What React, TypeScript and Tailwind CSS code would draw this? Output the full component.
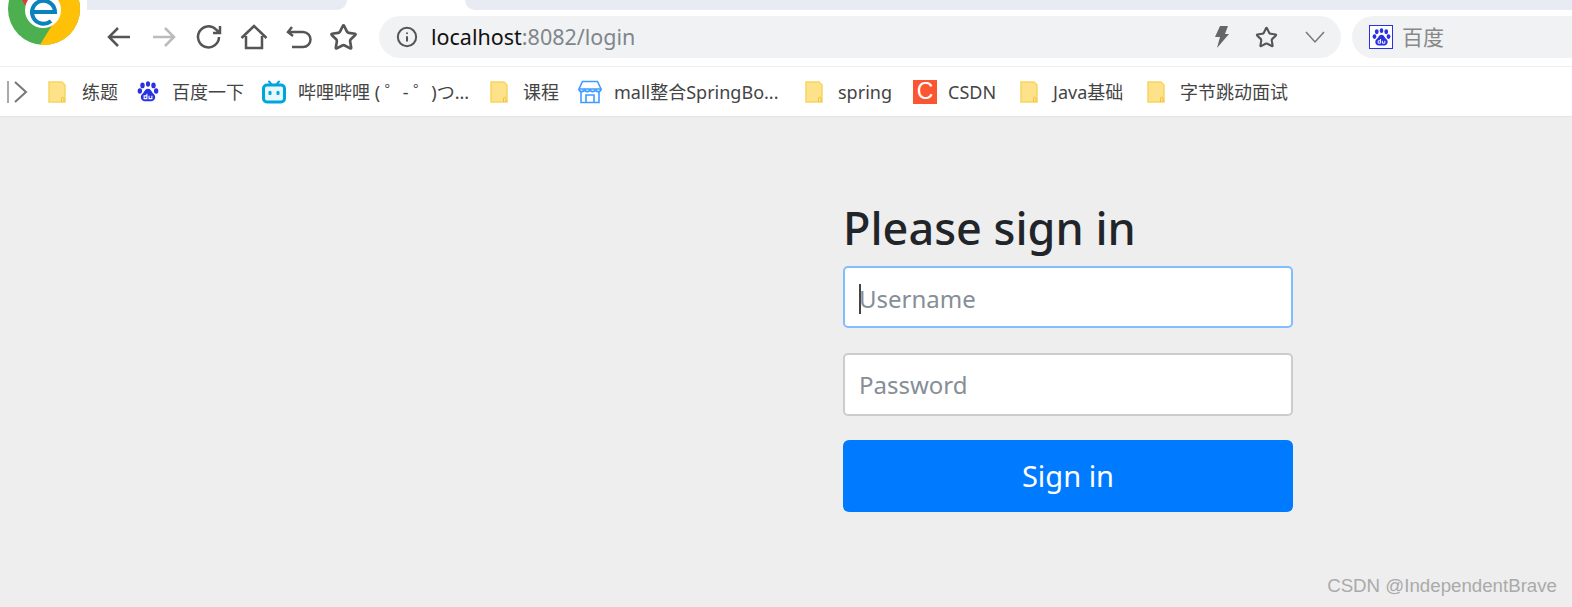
import { Star, Info } from "lucide-react";

const cjk = "font-['Noto_Sans','Noto_Sans_CJK_SC',sans-serif]";

const Folder = () => (
  <svg width="18" height="22" viewBox="0 0 18 22" className="shrink-0">
    <path d="M1 1h13l3 3v17H1z" fill="#fee28a" stroke="#f7d560" strokeWidth="1.5" />
    <path d="M13.5 21v-3.5a1.2 1.2 0 0 1 2.5 0V21" fill="none" stroke="#f0c040" strokeWidth="1" />
  </svg>
);

const Paw = ({ size = 22 }: { size?: number }) => (
  <svg width={size} height={size} viewBox="0 0 20 20" className="shrink-0">
    <ellipse cx="5" cy="4" rx="2" ry="2.6" fill="#2932e1" />
    <ellipse cx="10" cy="2.8" rx="1.9" ry="2.5" fill="#2932e1" />
    <ellipse cx="15" cy="4" rx="2" ry="2.6" fill="#2932e1" />
    <ellipse cx="2.6" cy="9" rx="2" ry="2.5" fill="#2932e1" />
    <ellipse cx="17.4" cy="9" rx="2" ry="2.5" fill="#2932e1" />
    <path d="M10 7c3 0 3 3 5.5 5 2 2 1 6-2.500 6.500H7c-3.500-.5-4.500-4.500-2.500-6.500C7 10 7 7 10 7z" fill="#2932e1" />
    <path d="M9 11.500v4.500H6.500v-2.500H9M11 13.500v2.500h2.500v-2.500" fill="none" stroke="#fff" strokeWidth="1" />
  </svg>
);

const Bilibili = () => (
  <svg width="24" height="24" viewBox="0 0 24 24" className="shrink-0">
    <path d="M7 1.500 10 5M17 1.500 14 5" stroke="#00a5dc" strokeWidth="2" strokeLinecap="round" />
    <rect x="1.500" y="5" width="21" height="17" rx="3.500" fill="#e9f8fd" stroke="#00a5dc" strokeWidth="3" />
    <rect x="6.500" y="11" width="3" height="4" rx="1" fill="#00a5dc" />
    <rect x="14.500" y="11" width="3" height="4" rx="1" fill="#00a5dc" />
  </svg>
);

const Store = () => (
  <svg width="24" height="24" viewBox="0 0 24 24" fill="none" stroke="#3f9cff" strokeWidth="1.600" className="shrink-0">
    <path d="M4.500 1.500h15L23 9H1z" />
    <path d="M1 9c0 3.500 5.500 3.500 5.500 0 0 3.500 5.500 3.500 5.500 0 0 3.500 5.500 3.500 5.500 0 0 3.500 5.500 3.500 5.500 0" />
    <path d="M3 12v10.500h18V12M8 22V15h8v7" />
  </svg>
);

const Csdn = () => (
  <div className="w-6 h-6 shrink-0 bg-[#fc5531] flex items-center justify-center text-white text-[23px] leading-none font-['Liberation_Sans',sans-serif]">
    C
  </div>
);

function Bookmark({ icon, label, gap, width }: { icon: React.ReactNode; label: string; gap: string; width: string }) {
  return (
    <div className={`flex items-center shrink-0 ${width}`}>
      <span className={`flex items-center justify-center ${gap}`}>{icon}</span>
      <span className="text-[18px] text-[#444] whitespace-nowrap leading-none">{label}</span>
    </div>
  );
}

export default function App() {
  return (
    <div className={`relative w-[1572px] h-[607px] overflow-hidden flex flex-col bg-[#eeeeee] ${cjk}`}>
      {/* logo sits over the tab strip */}
      <svg width="90" height="50" viewBox="0 0 90 50" className="absolute left-0 top-0">
        <circle cx="44" cy="9" r="36" fill="#4caf50" />
        <path d="M40 44.800 54 22V0h24.900A36 36 0 0 1 40 44.800z" fill="#ffc107" />
        <path d="M22 0h14v10h-8z" fill="#e53935" />
        <circle cx="43" cy="10" r="18" fill="#fff" />
        <path d="M33 12h22a11.500 11.500 0 1 0-4 9" fill="none" stroke="#0a83bd" strokeWidth="4" />
      </svg>

      {/* tab strip */}
      <div className="h-[10px] bg-white flex shrink-0">
        <div className="w-[87px] shrink-0" />
        <div className="w-[260px] shrink-0 bg-[#e8ebf3] rounded-br-[10px]" />
        <div className="w-[118px] shrink-0" />
        <div className="flex-1 bg-[#e8ebf3] rounded-bl-[10px]" />
      </div>

      {/* toolbar */}
      <div className="h-[57px] bg-white flex items-center shrink-0 border-b border-[#eeeeee] pb-[2px] pl-[104px]">
        <div className="flex items-center gap-[15px] text-[#555]">
          <svg width="30" height="30" viewBox="0 0 30 30" fill="none" stroke="#555" strokeWidth="2.500"><path d="M26 15H5M14 6l-9 9 9 9" /></svg>
          <svg width="30" height="30" viewBox="0 0 30 30" fill="none" stroke="#bbb" strokeWidth="2.500"><path d="M4 15h21M16 6l9 9-9 9" /></svg>
          <svg width="30" height="30" viewBox="0 0 30 30" fill="none" stroke="#555" strokeWidth="2.500"><path d="M25 15a10.500 10.500 0 1 1-3-7.500L26 11M26 4v7h-7" /></svg>
          <svg width="30" height="30" viewBox="0 0 30 30" fill="none" stroke="#555" strokeWidth="2.500"><path d="M2.500 16 15 4l12.500 12M7 14v12h16V14" /></svg>
          <svg width="30" height="30" viewBox="0 0 30 30" fill="none" stroke="#555" strokeWidth="2.500"><path d="M8 5 4 10l5 4M4 10h15a6 6 0 0 1 0 15H8" /></svg>
          <Star size={29} strokeWidth={2.200} color="#555" />
        </div>
        <div className="ml-[21px] w-[962px] h-[42px] rounded-[21px] bg-[#f1f2f4] flex items-center pl-[17px] pr-[14px]">
          <Info size={22} color="#555" strokeWidth={2.200} />
          <span className="ml-[13px] text-[21.500px] text-[#111] leading-none">localhost<span className="text-[#80868b]">:8082/login</span></span>
          <div className="ml-auto flex items-center gap-[25px]">
            <svg width="18" height="24" viewBox="0 0 18 24" fill="#666"><path d="M8 1h8l-3 8h4L5 23l3-11H3z" /></svg>
            <Star size={23} color="#555" strokeWidth={2.200} />
            <svg width="24" height="24" viewBox="0 0 24 24" fill="none" stroke="#777" strokeWidth="1.500"><path d="M3 7l9 10 9-10" /></svg>
          </div>
        </div>
        <div className="ml-[11px] flex-1 h-[42px] rounded-l-[21px] bg-[#f1f2f4] flex items-center pl-[17px]">
          <div className="w-6 h-6 border border-[#2932e1] flex items-center justify-center bg-white">
            <Paw size={19} />
          </div>
          <span className="ml-[9px] text-[21px] text-[#888] leading-none">百度</span>
        </div>
      </div>

      {/* bookmarks */}
      <div className="h-[50px] bg-white flex items-center shrink-0 border-b border-[#e4e4e4] pl-[6px]">
        <svg width="24" height="26" viewBox="0 0 24 26" fill="none" strokeWidth="2" className="mr-[18px]">
          <path d="M2 2v22" stroke="#aaa" />
          <path d="M9 3l11 10L9 23" stroke="#777" />
        </svg>
        <Bookmark icon={<Folder />} label="练题" gap="w-[18px] mr-[16px]" width="w-[89px]" />
        <Bookmark icon={<Paw />} label="百度一下" gap="w-[22px] mr-[13px]" width="w-[125px]" />
        <Bookmark icon={<Bilibili />} label="哔哩哔哩 ( ゜- ゜)つ..." gap="w-[24px] mr-[12px]" width="w-[228px]" />
        <Bookmark icon={<Folder />} label="课程" gap="w-[18px] mr-[15px]" width="w-[88px]" />
        <Bookmark icon={<Store />} label="mall整合SpringBo..." gap="w-[24px] mr-[12px]" width="w-[227px]" />
        <Bookmark icon={<Folder />} label="spring" gap="w-[18px] mr-[15px]" width="w-[108px]" />
        <Bookmark icon={<Csdn />} label="CSDN" gap="w-[24px] mr-[11px]" width="w-[107px]" />
        <Bookmark icon={<Folder />} label="Java基础" gap="w-[18px] mr-[15px]" width="w-[127px]" />
        <Bookmark icon={<Folder />} label="字节跳动面试" gap="w-[18px] mr-[15px]" width="w-[150px]" />
      </div>

      {/* login form */}
      <div className="flex-1 pl-[843px] pt-[84px]">
        <form className="w-[450px] flex flex-col" onSubmit={(e) => e.preventDefault()}>
          <h2 className="text-[45px] leading-[53px] font-medium text-[#212529] mb-[12px]">Please sign in</h2>
          <div className="h-[62px] rounded-[5px] bg-white border-2 border-[#80bdff] flex items-center pl-[14px] pt-[3px] text-[24px] text-[#868e96] mb-[25px]">
            <span className="w-[2px] h-[30px] bg-[#444] -mr-[2px]" />
            Username
          </div>
          <div className="h-[63px] rounded-[5px] bg-white border-2 border-[#ccc] flex items-center pl-[14px] text-[24px] text-[#868e96] mb-[24px]">
            Password
          </div>
          <button type="submit" className="h-[72px] rounded-[6px] bg-[#007bff] text-white text-[29px]">
            Sign in
          </button>
        </form>
      </div>

      <div className="absolute right-[15px] bottom-[11px] text-[18.700px] leading-none text-[#aaa] font-['Liberation_Sans',sans-serif]">
        CSDN @IndependentBrave
      </div>
    </div>
  );
}
